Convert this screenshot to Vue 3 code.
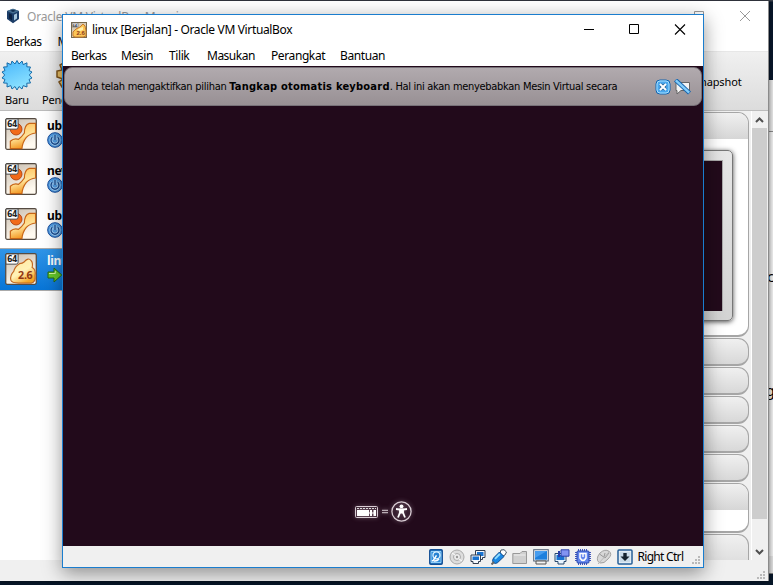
<script setup>
const backMenu = ['Berkas', 'Mesin', 'Bantuan']
const menu = ['Berkas', 'Mesin', 'Tilik', 'Masukan', 'Perangkat', 'Bantuan']
const machines = [
  { name: 'ubuntu', running: false },
  { name: 'new', running: false },
  { name: 'ubuntu2', running: false },
  { name: 'linux', running: true },
]
const collapsed = [1, 2, 3, 4, 5]
</script>

<template>
  <div class="desktop">
    <div class="document">
      <div class="doc-top"></div>
      <span class="doc-letter first">c</span>
      <span class="doc-letter second">g</span>
      <div class="doc-foot"></div>
    </div>

    <section class="manager">
      <header class="m-title">
        <svg class="m-logo" width="14" height="16" viewBox="0 0 14 16">
          <path d="M1 3L7 .8L13 3V11L7 15.3L1 11Z" fill="#1c3e68" />
          <path d="M1 3L7 5.5L13 3L7 .8Z" fill="#477193" />
          <path d="M3 5.2L6 6.8V12.6L3 10.5Z" fill="#0c2140" />
          <path d="M8 6.8L11 5.2V10.5L8 12.6Z" fill="#a7c6dc" />
          <path d="M4 2.8L7 1.8L10 2.8L7 4Z" fill="#102b4e" />
        </svg>
        <span class="m-name">Oracle VM VirtualBox Manajer</span>
        <svg class="m-controls" width="60" height="14" viewBox="0 0 60 14" fill="none" stroke="#999">
          <path d="M.5 2.5H9.5V11.5H.5ZM46 2L56 12M56 2L46 12" />
        </svg>
      </header>
      <nav class="m-menu"><span v-for="m in backMenu" :key="m">{{ m }}</span></nav>
      <div class="toolbar">
        <div class="tool">
          <svg width="32" height="32" viewBox="0 0 32 32">
            <defs>
              <linearGradient id="burst" x2=".4" y2="1"><stop stop-color="#46b5fb" /><stop offset="1" stop-color="#8be1ff" /></linearGradient>
            </defs>
            <path d="M16 1.5L18 5L21 2L22.2 5.6L26 3.8L25.8 7.8L29.5 8L28 11.5L31 13L28.3 16L31 19L28 20.5L29.5 24L25.8 24.2L26 28L22.2 26.6L21 30L18 27.5L16 31L14 27.5L11 30L9.8 26.6L6 28L6.2 24.2L2.5 24L4 20.5L1 19L3.7 16L1 13L4 11.5L2.5 8L6.2 7.8L6 3.8L9.8 5.6L11 2L14 5Z" fill="url(#burst)" stroke="#176ca9" />
          </svg>
          <span>Baru</span>
        </div>
        <div class="tool second-tool">
          <svg width="32" height="32" viewBox="0 0 32 32">
            <path d="M13 1H19L20 6L25 4L29 9L25 13L31 14V20L26 21L28 26L23 29L19 26L18 31H12L11 26L6 28L3 23L7 20L1 18V12L6 11L4 6L9 3L12 6Z" fill="#ecc267" stroke="#80551b" stroke-width="1.5" />
          </svg>
          <span>Pengaturan</span>
        </div>
        <span class="snapshot">Snapshot</span>
      </div>
      <div class="m-body">
        <div class="machine-list">
          <div v-for="m in machines" :key="m.name" class="machine" :class="{ selected: m.running }">
            <svg class="os" width="32" height="32" viewBox="0 0 33 33">
              <defs>
                <linearGradient id="tile" x2=".4" y2="1"><stop stop-color="#c9bdae" /><stop offset="1" stop-color="#fffaf0" /></linearGradient>
                <linearGradient id="ring" x2=".3" y2="1"><stop stop-color="#ffb94f" /><stop offset=".6" stop-color="#ffe398" /><stop offset="1" stop-color="#f39a25" /></linearGradient>
                <linearGradient id="rock" x2=".6" y2="1"><stop stop-color="#ffe89c" /><stop offset=".6" stop-color="#fff2b8" /><stop offset="1" stop-color="#f5a523" /></linearGradient>
              </defs>
              <rect x=".75" y=".75" width="31.5" height="31.5" rx="1.5" fill="url(#tile)" stroke="#554b42" stroke-width="1.3" />
              <template v-if="m.running">
                <path d="M6 28Q5 23 9 19Q10 14 15 11Q18 11 20 9Q24 4 27 8Q29 10 28 15Q32 17 31 23Q32 30 27 31H14Q7 31 6 28Z" fill="url(#rock)" stroke="#c26820" stroke-width="1.2" />
                <text x="13.5" y="26.5" class="version">2.6</text>
              </template>
              <template v-else>
                <circle cx="11.5" cy="11.5" r="6" fill="#f26919" stroke="#b44613" />
                <path d="M5.5 31.5V24Q9 20.5 14 22Q17 20 20 15.5Q20 7 25 5.5H31.5V15.5Q26 16 22 20Q18 25 17.5 31.5Z" fill="url(#ring)" stroke="#c76516" stroke-width="1.2" />
              </template>
              <path d="M1 1H13.5V9.5Q13.5 11.5 11.5 11.5H1Z" fill="#fff" stroke="#444" />
              <text x="2" y="9" class="bits">64</text>
            </svg>
            <div class="machine-info">
              <b>{{ m.name }}</b>
              <svg v-if="m.running" width="16" height="16" viewBox="0 0 16 16">
                <path d="M1 5H7V1L14.8 8L7 15V11H1Z" fill="#66c92b" stroke="#246a13" />
                <path d="M2 6.5H8.3V4" fill="none" stroke="#d5f7a2" />
              </svg>
              <svg v-else width="16" height="16" viewBox="0 0 16 16">
                <circle cx="8" cy="8" r="7.3" fill="#529de2" stroke="#134b9c" />
                <path d="M5.3 5.3A4 4 0 1 0 10.7 5.3M8 3V8" fill="none" stroke="#b9defb" stroke-width="2.8" />
                <path d="M5.3 5.3A4 4 0 1 0 10.7 5.3M8 3V8" fill="none" stroke="#124890" stroke-width="1.4" />
              </svg>
            </div>
          </div>
        </div>
        <div class="details">
          <div class="panel preview-panel">
            <div class="panel-head"></div>
            <div class="preview"><div class="screen"></div></div>
          </div>
          <div v-for="p in collapsed" :key="p" class="panel closed"></div>
          <div class="panel shared"><div class="panel-head"></div></div>
          <div class="panel last"></div>
        </div>
        <div class="scrollbar">
          <svg width="15" height="17" viewBox="0 0 15 17"><path d="M4 11L7.5 7.5L11 11" /></svg>
          <div class="thumb"></div>
          <svg class="down" width="15" height="17" viewBox="0 0 15 17"><path d="M4 6L7.5 9.5L11 6" /></svg>
        </div>
      </div>
      <footer class="m-status">
        <svg width="9" height="9" viewBox="0 0 9 9" fill="#b9b9b9"><path d="M6 0h2v2H6zM3 3h2v2H3zM6 3h2v2H6zM0 6h2v2H0zM3 6h2v2H3zM6 6h2v2H6z" /></svg>
      </footer>
    </section>

    <section class="vm">
      <header class="vm-title">
        <svg width="16" height="16" viewBox="0 0 16 16">
          <rect x=".5" y=".5" width="15" height="15" fill="#d7cab4" stroke="#77694d" />
          <path d="M2 14V10L5 7L9 5L12 2L14 4L15 9V14L12 15H4Z" fill="#fbc758" stroke="#c77a2c" />
          <path d="M6 8L9 6L12 5V8L9 9Z" fill="#fff0ae" />
          <path d="M1 1H7V5H1Z" fill="#eee" stroke="#666" stroke-width=".6" />
          <text x="1.5" y="4.7" class="mini-bits">64</text>
          <text x="5.5" y="13" class="mini-version">2.6</text>
        </svg>
        <span class="vm-name">linux [Berjalan] - Oracle VM VirtualBox</span>
        <svg class="controls" width="104" height="12" viewBox="0 0 104 12" fill="none" stroke="#000">
          <path d="M0 5.5H10M45.5 .5H54.5V9.5H45.5Z" />
          <path d="M91 .5L101 10.5M101 .5L91 10.5" stroke-width="1.1" />
        </svg>
      </header>
      <nav class="vm-menu"><span v-for="m in menu" :key="m" :class="m.toLowerCase()">{{ m }}</span></nav>
      <main class="guest">
        <div class="message">
          <p><span class="lead">Anda telah mengaktifkan pilihan </span><b>Tangkap otomatis keyboard</b><span class="tail">. Hal ini akan menyebabkan Mesin Virtual secara</span></p>
          <svg width="16" height="16" viewBox="0 0 16 16">
            <rect x="1" y="1" width="14" height="14" rx="4" fill="#49a7ed" stroke="#1264b0" />
            <rect x="2" y="2" width="12" height="12" rx="3" fill="none" stroke="#a9e0ff" />
            <path d="M5.5 5.5L10.5 10.5M10.5 5.5L5.5 10.5" stroke="#245d91" stroke-width="3.4" />
            <path d="M5 5L11 11M11 5L5 11" stroke="#fff" stroke-width="2" />
          </svg>
          <svg class="mute" width="17" height="16" viewBox="0 0 17 16">
            <path d="M2 3.5H15.5V11.5H7L3 15V11.5H2Z" fill="#f4f4f4" stroke="#666" />
            <path d="M1.5 1L15.5 14" stroke="#1764ad" stroke-width="4.4" />
            <path d="M1.8 1.3L15.2 13.7" stroke="#83cdfa" stroke-width="2.4" />
          </svg>
        </div>
        <div class="boot">
          <svg width="62" height="28" viewBox="0 0 62 28">
            <g fill="none" stroke="#d9cdd4">
              <rect x="3.5" y="8.5" width="22" height="11" rx="1" />
              <circle cx="49.5" cy="13.5" r="9.6" stroke-width="1.3" />
            </g>
            <path d="M5 12H17V18H5ZM18 12H20V18H18ZM21.5 12H24V18H21.5Z" fill="#fff" />
            <path d="M17 15H24" stroke="#fff" />
            <path d="M5 10.5H24" stroke="#ddd" stroke-dasharray="2 1" />
            <path d="M30 12.3H36M30 14.7H36" stroke="#b9acb4" stroke-width="1.3" />
            <circle cx="49.5" cy="8.3" r="1.9" fill="#fff" />
            <path d="M44 11L48 11.5V14.5L46 19.5M55 11L51 11.5V14.5L53 19.5" stroke="#fff" stroke-width="1.8" fill="none" />
            <path d="M47.5 10.5H51.5V15.5H47.5Z" fill="#fff" />
          </svg>
        </div>
      </main>
      <footer class="vm-status">
        <svg width="16" height="16" viewBox="0 0 16 16">
          <rect x="1.8" y=".8" width="12.4" height="14.4" rx="1" fill="#2e8ddd" stroke="#124e94" stroke-width="1.5" />
          <path d="M3 2.5H13V13.5H3Z" fill="none" stroke="#a9ddfd" stroke-width=".8" />
          <circle cx="8.5" cy="6.3" r="3.5" fill="#2581d2" stroke="#dff3ff" stroke-width="1.3" />
          <path d="M8.5 6.3L5 11.8H3.8M6 12Q9 12.5 11 10" fill="none" stroke="#fff" stroke-width="1.5" />
        </svg>
        <svg width="16" height="16" viewBox="0 0 16 16">
          <circle cx="8" cy="8" r="7" fill="#ddd" stroke="#aaa" /><circle cx="8" cy="8" r="3.5" fill="#eee" stroke="#aaa" /><circle cx="8" cy="8" r="1.2" fill="#999" /><path d="M3 4L6 6M10 10L13 12" stroke="#fff" />
        </svg>
        <svg width="16" height="16" viewBox="0 0 16 16">
          <path d="M5.5 1.5H15V8.5H12.5V10.5H8V8.5H5.5Z" fill="#f5f8fc" stroke="#333f50" /><path d="M7 3H13.5V7H7Z" fill="#1973d0" />
          <path d="M1 6H10.5V12.5H8.5V14.5H3V12.5H1Z" fill="#f5f8fc" stroke="#333f50" /><path d="M2.5 7.5H9V11H2.5Z" fill="#1973d0" />
        </svg>
        <svg width="16" height="16" viewBox="0 0 16 16">
          <path d="M10 1L13 .7L15.5 3L14 6L12 7L9 4Z" fill="#fff" stroke="#456" />
          <path d="M8.5 3L13 7.5L6.5 13.7Q4.2 15.3 2.4 13.6T2.5 9Z" fill="#1988e5" stroke="#134b8b" /><path d="M4 9.8L8.8 5" stroke="#91ddff" stroke-width="1.8" /><path d="M.5 15.5L3 13" stroke="#666" stroke-width="2" />
        </svg>
        <svg width="16" height="16" viewBox="0 0 16 16">
          <path d="M.8 4.5H8L10 2.5H14.5V14.5H.8Z" fill="#d0d0d0" stroke="#999" /><path d="M2 6H13.5" stroke="#eee" />
        </svg>
        <svg width="16" height="16" viewBox="0 0 16 16">
          <rect x=".7" y=".7" width="14.6" height="11.3" fill="#e9f0f8" stroke="#536275" /><rect x="2" y="2" width="12" height="8.7" fill="#1e80dd" /><path d="M2 2H14L2 9Z" fill="#479def" /><path d="M3 12H13V15H3Z" fill="#f3f3f3" stroke="#555" />
        </svg>
        <svg width="16" height="16" viewBox="0 0 16 16">
          <path d="M1 4.5H12V12.5H10V15H4V12.5H1Z" fill="#e8f4ff" stroke="#29486d" /><path d="M2.5 6H10.5V11H2.5Z" fill="#1973d0" /><path d="M7 .8H15V7.2H7Z" fill="#8294f2" stroke="#293ea7" /><path d="M5 2V8" stroke="#293ea7" stroke-width="2" />
        </svg>
        <svg width="16" height="16" viewBox="0 0 16 16">
          <path d="M3 1H13M3 15H13M1 3V13M15 3V13" stroke="#4056bd" stroke-width="2" stroke-dasharray="1 1" /><rect x="2" y="2" width="12" height="12" rx="1" fill="#6285ed" stroke="#2948ae" /><path d="M5 4.5H11V9Q8 14 5 9Z" fill="#6688ed" stroke="#fff" stroke-width="1.5" /><path d="M8 4V8" stroke="#fff" stroke-width="1.4" />
        </svg>
        <svg width="16" height="16" viewBox="0 0 16 16">
          <path d="M4 4Q9-.5 13 2.3Q17 5 12 10Q8 15 4 14Q0 12 2 7Z" fill="#d8d8d8" stroke="#a1a1a1" /><path d="M3.5 5L9 9L13 4M8 8L9 4" fill="none" stroke="#999" /><path d="M2 15L14 2" stroke="#b8b8b8" />
        </svg>
        <svg width="16" height="16" viewBox="0 0 16 16">
          <rect x="1" y="1" width="14" height="14" rx="1" fill="#f5fbff" stroke="#245d96" stroke-width="1.5" /><rect x="2.5" y="2.5" width="11" height="11" fill="#cbdce9" /><path d="M6.3 4H9.7V7.5H12.5L8 12L3.5 7.5H6.3Z" fill="#15232f" />
        </svg>
        <span class="host-key">Right Ctrl</span>
        <svg class="grip" width="9" height="9" viewBox="0 0 9 9" fill="#b9b9b9"><path d="M6 0h2v2H6zM3 3h2v2H3zM6 3h2v2H6zM0 6h2v2H0zM3 6h2v2H3zM6 6h2v2H6z" /></svg>
      </footer>
    </section>
  </div>
</template>

<style>
body { margin: 0; overflow: hidden; }
</style>

<style scoped>
* { box-sizing: border-box; }
svg { display: block; flex: none; }
.desktop { position: relative; width: 773px; height: 585px; overflow: hidden; background: linear-gradient(#3d414c 0 1px, #08172b 2px 80px, #071729); font: 12px "Noto Sans", sans-serif; color: #000; }
.document { position: absolute; left: 700px; top: 80px; width: 73px; height: 494px; background: #eee; border-bottom: 1px solid #777; overflow: hidden; }
.doc-top { height: 52px; border-bottom: 1px solid #888; background: #e5e5e5; }
.doc-letter { position: absolute; left: 67px; font-size: 15px; line-height: 18px; }
.first { top: 187px; }
.second { top: 302px; left: 66px; font-size: 14px; }
.doc-foot { position: absolute; bottom: 0; width: 100%; height: 17px; background: #ddd; }

.manager { position: absolute; left: 0; top: 1px; width: 769px; height: 580px; display: flex; flex-direction: column; background: #fff; border-right: 1px solid #8b8b8b; box-shadow: 0 0 5px rgba(0,0,0,.55); overflow: hidden; }
.m-title { height: 30px; display: flex; align-items: center; padding-left: 6px; color: #999; }
.m-name { margin-left: 7px; width: 656px; letter-spacing: -.2px; white-space: nowrap; }
.m-controls { margin-left: 11px; }
.m-menu { height: 21px; display: flex; gap: 16px; padding: 2px 0 0 6px; line-height: 17px; border-bottom: 1px solid #e7e7e7; letter-spacing: -.5px; }
.toolbar { height: 59px; flex: none; display: flex; background: linear-gradient(#f0f0f0, #dcdcdc); border-bottom: 1px solid #bcbcbc; font-size: 11px; }
.tool { width: 32px; margin-left: 1px; padding-top: 7px; display: flex; flex-direction: column; align-items: center; line-height: 16px; }
.tool span { margin-top: 1px; letter-spacing: -.2px; }
.second-tool { margin-left: 9px; width: 60px; align-items: flex-start; }
.second-tool svg { margin-left: 14px; }
.snapshot { margin-left: 592px; line-height: 16px; padding-top: 22px; letter-spacing: -.1px; }
.m-body { height: 449px; flex: none; display: flex; background: #f0f0f0; }
.machine-list { width: 300px; background: #fff; padding-top: 2px; }
.machine { height: 45px; display: flex; padding: 5px 0 0 5px; }
.selected { background: linear-gradient(#3095e8, #0875d7); height: 43px; border-top: 1px solid #aaa; border-bottom: 1px solid #aaa; padding-top: 4px; }
.bits { font: bold 9px "DejaVu Sans Condensed", sans-serif; fill: #222; letter-spacing: -.4px; }
.version { font: bold 11px "Noto Sans", sans-serif; fill: #933712; letter-spacing: -.3px; }
.machine-info { margin-left: 10px; }
.machine-info b { display: block; height: 14px; line-height: 15px; letter-spacing: -.3px; }
.selected b { color: #fff; }
.details { width: 449px; padding-top: 1px; display: flex; flex-direction: column; gap: 1px; height: 449px; overflow: hidden; }
.panel { flex: none; border: 1px solid #a6a6a6; border-width: 1px 1px 2px; border-radius: 11px; background: #fff; overflow: hidden; height: 28px; }
.preview-panel { height: 225px; }
.closed, .last { background: linear-gradient(#f0f0f0, #d8d8d8); }
.panel-head { height: 26px; background: linear-gradient(#f0f0f0, #d6d6d6); }
.shared { height: 50px; }
.last { height: 40px; }
.preview { margin: 11px 0 0 219px; width: 213px; height: 171px; padding: 9px; background: linear-gradient(#e6e6e6, #d3d3d3); border: 1px solid #777; border-radius: 5px; box-shadow: 0 1px 5px rgba(0,0,0,.7); }
.screen { height: 151px; background: #220a1b; border: 1px solid #aaa; border-width: 1px 1px 0 0; }
.scrollbar { width: 17px; margin-left: 2px; border-left: 1px solid #fff; }
.scrollbar path { fill: none; stroke: #505050; stroke-width: 2; }
.thumb { height: 391px; background: #cdcdcd; width: 15px; }
.down { margin-top: 25px; }
.m-status { height: 21px; background: #f0f0f0; display: flex; justify-content: flex-end; padding: 11px 2px 0 0; }

.vm { position: absolute; left: 62px; top: 14px; width: 642px; height: 554px; border: 1px solid #1a7dce; background: #fff; box-shadow: 0 5px 18px rgba(0,0,0,.42); display: flex; flex-direction: column; }
.vm-title { height: 29px; display: flex; align-items: center; padding-left: 8px; }
.vm-name { width: 490px; margin-left: 5px; white-space: nowrap; letter-spacing: -.35px; }
.controls { margin-left: 2px; }
.mini-bits { font: bold 4px sans-serif; fill: #333; }
.mini-version { font: bold 6px sans-serif; fill: #8d371c; }
.vm-menu { height: 22px; display: flex; gap: 16px; padding-left: 8px; line-height: 23px; letter-spacing: -.5px; }
.berkas { width: 34px; }
.mesin { width: 32px; }
.tilik { width: 22px; }
.masukan { width: 48px; }
.perangkat { width: 53px; }
.perangkat, .bantuan, .mesin, .tilik { letter-spacing: -.4px; }
.guest { height: 480px; display: flex; flex-direction: column; justify-content: space-between; align-items: center; padding: 1px 1px 20px; background: #220a1b; }
.message { width: 638px; height: 39px; display: flex; align-items: center; padding-left: 9px; border: 1px solid #777178; border-radius: 8px; background: linear-gradient(#b1aaae, #989094); font: 11px "DejaVu Sans Condensed", "DejaVu Sans", sans-serif; }
.message p { width: 581px; margin: 0; white-space: nowrap; }
.lead { letter-spacing: -.28px; }
.message b { letter-spacing: .23px; }
.tail { letter-spacing: -.3px; }
.mute { margin-left: 3px; }
.boot { width: 62px; height: 28px; filter: drop-shadow(0 0 2px #836b7a); }
.vm-status { height: 21px; display: flex; align-items: center; gap: 5px; padding-left: 364.5px; background: #f0f0f0; position: relative; }
.host-key { letter-spacing: -.7px; line-height: 18px; white-space: nowrap; }
.grip { position: absolute; right: 2px; bottom: 2px; }
</style>
